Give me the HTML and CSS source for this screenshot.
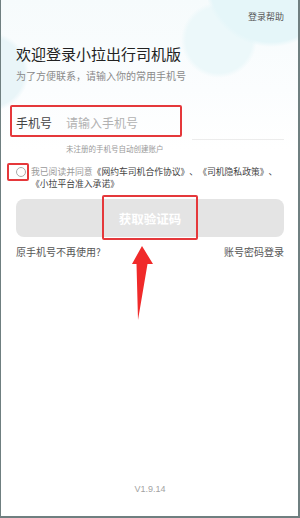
FILE: index.html
```html
<!DOCTYPE html>
<html lang="zh-CN">
<head>
<meta charset="utf-8">
<title>登录</title>
<link rel="stylesheet" href="styles.css">
</head>
<body>
<div class="screen">
  <div class="help">登录帮助</div>
  <h1 class="title">欢迎登录小拉出行司机版</h1>
  <p class="sub">为了方便联系，请输入你的常用手机号</p>
  <div class="phone-row">
    <span class="label">手机号</span>
    <span class="placeholder">请输入手机号</span>
  </div>
  <p class="hint">未注册的手机号自动创建账户</p>
  <div class="agree">
    <span class="radio"></span>
    <p class="agree-text"><span class="muted">我已阅读并同意</span>《网约车司机合作协议》、《司机隐私政策》、<span class="nowrap">《小拉平台准入承诺》</span></p>
  </div>
  <div class="btn">获取验证码</div>
  <div class="links">
    <span>原手机号不再使用?</span>
    <span>账号密码登录</span>
  </div>
  <div class="version">V1.9.14</div>

  <div class="mark mark-phone"></div>
  <div class="mark mark-radio"></div>
  <div class="mark mark-btn"></div>
  <svg class="arrow" width="30" height="80" viewBox="0 0 30 80">
    <polygon points="12,0 23,18 17.5,18 8,74 6.5,18 2,18" fill="#f02a2a"/>
  </svg>
</div>
</body>
</html>
```

FILE: styles.css
```css
html, body {
  margin: 0;
  padding: 0;
}
body {
  width: 300px;
  height: 518px;
  overflow: hidden;
  font-family: "Noto Sans CJK SC", "Noto Sans", sans-serif;
  background: #6f7f80;
}
.screen {
  position: relative;
  box-sizing: border-box;
  width: 297px;
  height: 516px;
  margin-left: 1px;
  padding: 0 14px 21px 15px;
  display: flex;
  flex-direction: column;
  background:
    radial-gradient(circle at 270px -20px, #e5f6f9 0, #e5f6f9 62px, rgba(229,246,249,0) 67px),
    radial-gradient(circle at 218px 40px, #ecf8fa 0, #ecf8fa 33px, rgba(236,248,250,0) 38px),
    radial-gradient(circle at -12px 72px, #e9f5f8 0, #e9f5f8 35px, rgba(233,245,248,0) 40px),
    linear-gradient(#f6fbfc 0, #fbfdfe 90px, #ffffff 150px);
  background-color: #fff;
}
.help {
  margin-top: 11px;
  line-height: 12px;
  font-size: 9px;
  color: #555;
  text-align: right;
}
.title {
  margin: 20.5px 0 0;
  font-size: 15px;
  line-height: 20px;
  font-weight: 400;
  color: #222;
}
.sub {
  margin: 5px 0 0;
  font-size: 10px;
  line-height: 14px;
  color: #8a8a8a;
}
.phone-row {
  margin-top: 22.5px;
  height: 35px;
  display: flex;
  align-items: center;
  font-size: 12px;
  background: linear-gradient(#ececec, #ececec) no-repeat right bottom / 92px 1px;
}
.label {
  color: #444;
  width: 50px;
}
.placeholder {
  color: #b2b2b2;
}
.hint {
  margin: 3.5px 0 0 50px;
  font-size: 7.5px;
  line-height: 10px;
  color: #999;
}
.agree {
  margin-top: 12.75px;
  display: flex;
  align-items: flex-start;
}
.radio {
  flex: none;
  box-sizing: border-box;
  width: 10px;
  height: 10px;
  margin-top: 0.75px;
  border: 1px solid #aaa;
  border-radius: 50%;
}
.agree-text {
  margin: 0 0 0 5px;
  font-size: 8.8px;
  line-height: 11.5px;
  color: #444;
  text-spacing-trim: space-all;
}
.nowrap {
  white-space: nowrap;
}
.muted {
  color: #9a9a9a;
}
.btn {
  margin-top: 9.75px;
  height: 38px;
  border-radius: 8px;
  background: #e4e4e4;
  color: #fff;
  font-size: 12.5px;
  font-weight: 700;
  display: flex;
  align-items: center;
  justify-content: center;
}
.links {
  margin-top: 8px;
  display: flex;
  justify-content: space-between;
  font-size: 10px;
  line-height: 14px;
  color: #555;
}
.version {
  margin-top: auto;
  text-align: center;
  font-family: "Liberation Sans", Arial, sans-serif;
  font-size: 9px;
  line-height: 12px;
  color: #a3a3a3;
}
.mark {
  position: absolute;
  box-sizing: border-box;
  border: 2px solid #e5383b;
  border-radius: 2px;
}
.mark-phone {
  left: 9px;
  top: 105px;
  width: 172px;
  height: 32px;
}
.mark-radio {
  left: 6px;
  top: 163px;
  width: 22px;
  height: 18px;
}
.mark-btn {
  left: 101px;
  top: 195px;
  width: 96px;
  height: 45px;
}
.arrow {
  position: absolute;
  left: 129px;
  top: 246px;
}
```
